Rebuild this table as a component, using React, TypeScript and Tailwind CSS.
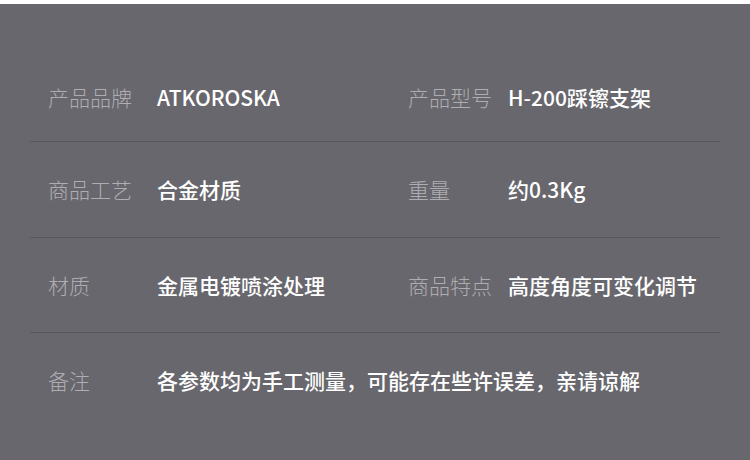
import React from "react";

const font = { fontFamily: '"Noto Sans CJK SC", "Noto Sans", sans-serif' };

function Cell({ label, value, labelW }: { label: string; value: string; labelW: string }) {
  return (
    <div className="flex items-center">
      <div className={`${labelW} shrink-0 text-[21px] font-light text-[#aeadb2]`}>{label}</div>
      <div className="text-[21px] font-medium text-white whitespace-nowrap">{value}</div>
    </div>
  );
}

export default function App() {
  const rows: [string, string, string, string, string][] = [
    ["产品品牌", "ATKOROSKA", "产品型号", "H-200踩镲支架", "h-[88px]"],
    ["商品工艺", "合金材质", "重量", "约0.3Kg", "h-[96px]"],
    ["材质", "金属电镀喷涂处理", "商品特点", "高度角度可变化调节", "h-[95px]"],
  ];
  return (
    <div className="w-[750px] h-[460px] bg-[#68676d] flex flex-col overflow-hidden" style={font}>
      <div className="h-[4px] bg-white shrink-0" />
      <div className="px-[30px] pt-[50px] flex flex-col">
        {rows.map((r, i) => (
          <div key={i} className={`${r[4]} border-b border-[#58575c] grid grid-cols-[360px_1fr] items-center pl-[18px] leading-none`}>
            <Cell label={r[0]} value={r[1]} labelW="w-[109px]" />
            <Cell label={r[2]} value={r[3]} labelW="w-[100px]" />
          </div>
        ))}
        <div className="h-[94px] flex items-center pl-[18px] leading-none">
          <div className="w-[109px] shrink-0 text-[21px] font-light text-[#aeadb2]">备注</div>
          <div className="text-[21px] font-medium text-white whitespace-nowrap">各参数均为手工测量，可能存在些许误差，亲请谅解</div>
        </div>
      </div>
    </div>
  );
}
